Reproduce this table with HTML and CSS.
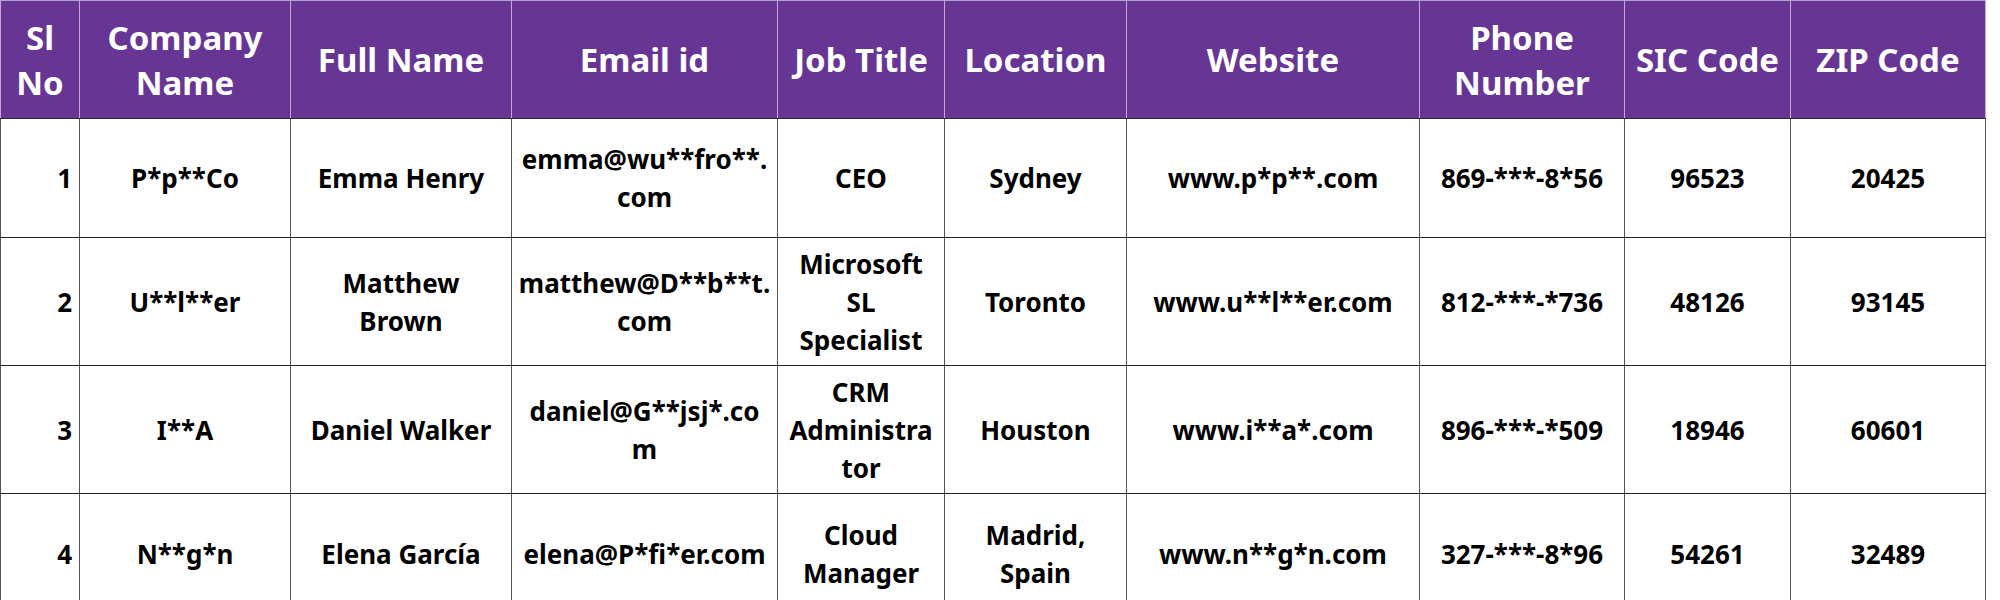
FILE: index.html
```html
<!DOCTYPE html>
<html lang="en">
<head>
<meta charset="utf-8">
<title>Contacts</title>
<link rel="stylesheet" href="styles.css">
</head>
<body>
<table class="grid">
  <colgroup>
    <col class="c-sl"><col class="c-company"><col class="c-name"><col class="c-email"><col class="c-job">
    <col class="c-loc"><col class="c-web"><col class="c-phone"><col class="c-sic"><col class="c-zip">
  </colgroup>
  <thead>
    <tr class="head">
      <th>Sl<br>No</th>
      <th>Company<br>Name</th>
      <th>Full Name</th>
      <th>Email id</th>
      <th>Job Title</th>
      <th>Location</th>
      <th>Website</th>
      <th>Phone<br>Number</th>
      <th>SIC Code</th>
      <th>ZIP Code</th>
    </tr>
  </thead>
  <tbody>
    <tr class="r-short">
      <td class="num">1</td>
      <td>P*p**Co</td>
      <td>Emma Henry</td>
      <td>emma@wu**fro**.<br>com</td>
      <td>CEO</td>
      <td>Sydney</td>
      <td>www.p*p**.com</td>
      <td>869-***-8*56</td>
      <td>96523</td>
      <td>20425</td>
    </tr>
    <tr class="r-tall">
      <td class="num">2</td>
      <td>U**l**er</td>
      <td>Matthew<br>Brown</td>
      <td>matthew@D**b**t.<br>com</td>
      <td>Microsoft<br>SL<br>Specialist</td>
      <td>Toronto</td>
      <td>www.u**l**er.com</td>
      <td>812-***-*736</td>
      <td>48126</td>
      <td>93145</td>
    </tr>
    <tr class="r-tall">
      <td class="num">3</td>
      <td>I**A</td>
      <td>Daniel Walker</td>
      <td>daniel@G**jsj*.co<br>m</td>
      <td>CRM<br>Administra<br>tor</td>
      <td>Houston</td>
      <td>www.i**a*.com</td>
      <td>896-***-*509</td>
      <td>18946</td>
      <td>60601</td>
    </tr>
    <tr class="r-last">
      <td class="num">4</td>
      <td>N**g*n</td>
      <td>Elena García</td>
      <td>elena@P*fi*er.com</td>
      <td>Cloud<br>Manager</td>
      <td>Madrid,<br>Spain</td>
      <td>www.n**g*n.com</td>
      <td>327-***-8*96</td>
      <td>54261</td>
      <td>32489</td>
    </tr>
  </tbody>
</table>
</body>
</html>
```

FILE: styles.css
```css
html, body {
  margin: 0;
  padding: 0;
  background: #ffffff;
}

body {
  font-family: "Noto Sans", "Open Sans", sans-serif;
}

.grid {
  border-collapse: collapse;
  table-layout: fixed;
  width: 1986px;
}

.c-sl { width: 79px; }
.c-company { width: 211px; }
.c-name { width: 221px; }
.c-email { width: 266px; }
.c-job { width: 167px; }
.c-loc { width: 182px; }
.c-web { width: 293px; }
.c-phone { width: 205px; }
.c-sic { width: 166px; }
.c-zip { width: 195px; }

.head th {
  height: 117px;
  padding: 0 4px;
  background: #673594;
  color: #ffffff;
  font-size: 33px;
  font-weight: 700;
  line-height: 45px;
  text-align: center;
  vertical-align: middle;
  white-space: nowrap;
  border-top: 1px solid #b79bd6;
  border-left: 1px solid #c2a8de;
  border-right: 1px solid #c2a8de;
  border-bottom: 1px solid #2a2a2a;
}

.grid td {
  padding: 0 4px;
  color: #000000;
  font-size: 26px;
  font-weight: 700;
  line-height: 38px;
  text-align: center;
  vertical-align: middle;
  white-space: nowrap;
  border-left: 1px solid #555555;
  border-right: 1px solid #555555;
  border-top: 1px solid #222222;
  border-bottom: 1px solid #222222;
}

.grid td.num {
  text-align: right;
  padding-right: 7px;
}

.r-short td { height: 118px; }
.r-tall td { height: 127px; }
.r-last td { height: 119px; }
```
